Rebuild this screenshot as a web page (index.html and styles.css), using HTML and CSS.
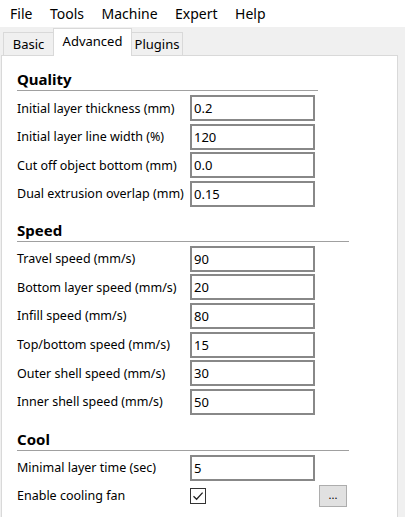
FILE: index.html
```html
<!DOCTYPE html>
<html>
<head>
<meta charset="utf-8">
<link rel="stylesheet" href="styles.css">
</head>
<body>
<div class="menubar">
  <span class="menu-item">File</span>
  <span class="menu-item">Tools</span>
  <span class="menu-item">Machine</span>
  <span class="menu-item">Expert</span>
  <span class="menu-item">Help</span>
</div>
<div class="tabbar">
  <div class="tab tab-basic">Basic</div>
  <div class="tab tab-active">Advanced</div>
  <div class="tab tab-plugins">Plugins</div>
</div>
<div class="panel">
  <section class="group group-quality">
    <div class="group-title">Quality</div>
    <div class="rows">
      <label class="label">Initial layer thickness (mm)</label><div class="field">0.2</div>
      <label class="label">Initial layer line width (%)</label><div class="field">120</div>
      <label class="label">Cut off object bottom (mm)</label><div class="field">0.0</div>
      <label class="label">Dual extrusion overlap (mm)</label><div class="field">0.15</div>
    </div>
  </section>
  <section class="group group-speed">
    <div class="group-title">Speed</div>
    <div class="rows">
      <label class="label">Travel speed (mm/s)</label><div class="field">90</div>
      <label class="label">Bottom layer speed (mm/s)</label><div class="field">20</div>
      <label class="label">Infill speed (mm/s)</label><div class="field">80</div>
      <label class="label">Top/bottom speed (mm/s)</label><div class="field">15</div>
      <label class="label">Outer shell speed (mm/s)</label><div class="field">30</div>
      <label class="label">Inner shell speed (mm/s)</label><div class="field">50</div>
    </div>
  </section>
  <section class="group group-cool">
    <div class="group-title">Cool</div>
    <div class="rows rows-cool">
      <label class="label">Minimal layer time (sec)</label><div class="field">5</div><div></div>
      <label class="label label-check">Enable cooling fan</label>
      <div class="check"><svg width="14" height="14" viewBox="0 0 14 14"><path d="M2.5 7.2 L5.6 10.3 L11.6 3.6" fill="none" stroke="#222" stroke-width="1.3"/></svg></div>
      <div class="more-btn">...</div>
    </div>
  </section>
</div>
</body>
</html>
```

FILE: styles.css
```css
html, body {
  margin: 0;
  padding: 0;
}
body {
  width: 405px;
  height: 517px;
  overflow: hidden;
  background: #f0f0f0;
  font-family: "Noto Sans", "Open Sans", sans-serif;
  color: #000;
}
.menubar {
  height: 27px;
  background: #fff;
  display: flex;
  align-items: center;
  padding-left: 10px;
  font-size: 14px;
}
.menu-item {
  margin-right: 17.5px;
}
.tabbar {
  height: 28px;
  display: flex;
  align-items: flex-end;
  padding-left: 3px;
  font-size: 13px;
}
.tab {
  box-sizing: border-box;
  height: 23px;
  border: 1px solid #d9d9d9;
  border-bottom: none;
  background: #f0f0f0;
  display: flex;
  align-items: center;
  justify-content: center;
}
.tab-basic {
  width: 50px;
  border-right: none;
}
.tab-active {
  width: 79px;
  height: 28px;
  background: #fff;
  position: relative;
  top: 1px;
  padding-bottom: 3px;
}
.tab-plugins {
  width: 51px;
  border-left: none;
}
.panel {
  box-sizing: border-box;
  width: 397px;
  height: 462px;
  margin-left: 1px;
  background: #fff;
  border: 1px solid #d9d9d9;
  border-bottom: none;
  padding: 13px 0 0 15px;
  font-size: 12.5px;
}
.label {
  white-space: nowrap;
}
.group-title {
  height: 21px;
  line-height: 21px;
  font-weight: bold;
  font-size: 15px;
  border-bottom: 1px solid #a0a0a0;
}
.group-quality { width: 301px; }
.group-speed { width: 332px; margin-top: 13px; }
.group-cool { width: 332px; margin-top: 14px; }
.rows {
  display: grid;
  grid-template-columns: 173px 125px;
  row-gap: 2.6px;
  margin-top: 4px;
  align-items: center;
}
.rows-cool {
  grid-template-columns: 173px 129px 28px;
  row-gap: 4px;
}
.field {
  box-sizing: border-box;
  height: 26px;
  width: 125px;
  border: 2px solid #888;
  padding-left: 2px;
  line-height: 22px;
  font-size: 13px;
}
.check {
  box-sizing: border-box;
  width: 16px;
  height: 16px;
  border: 1px solid #333;
  display: flex;
  align-items: center;
  justify-content: center;
}
.more-btn {
  box-sizing: border-box;
  width: 28px;
  height: 22px;
  background: #e1e1e1;
  border: 1px solid #adadad;
  font-size: 11px;
  text-align: center;
  line-height: 18px;
}
```
